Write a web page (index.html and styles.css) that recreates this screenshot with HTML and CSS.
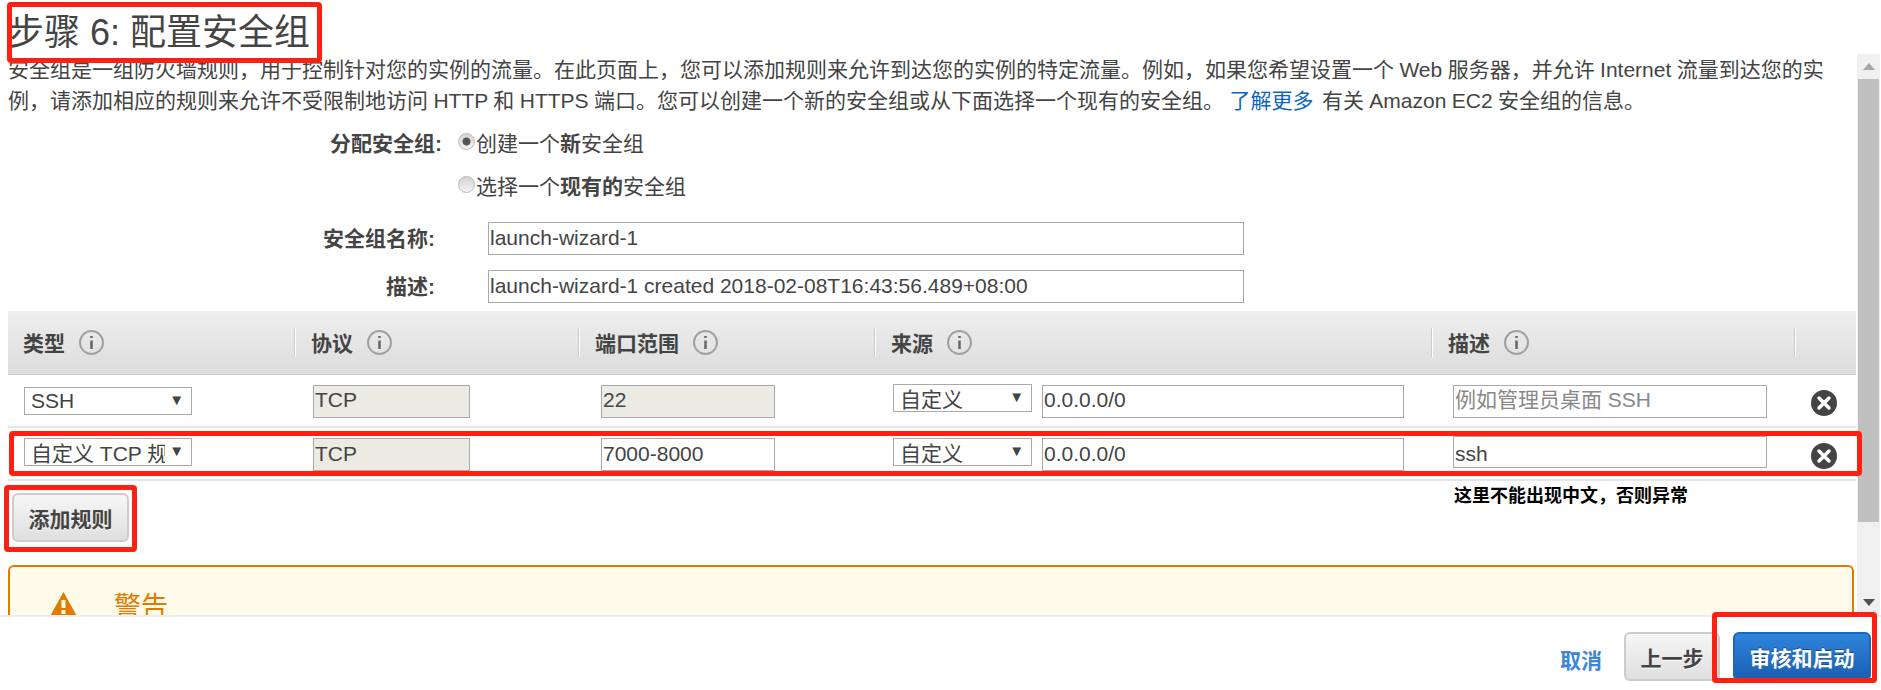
FILE: index.html
```html
<!-- === EC2 WIZARD STEP 6: SECURITY GROUP === -->
<!DOCTYPE html>
<html>
<head>
  <title>步骤 6: 配置安全组</title>
  <link rel="stylesheet" href="styles.css">
</head>
<body>
  <div class="page">
    <div class="scrollArea">
      <div class="content">
        <h1>步骤 6: 配置安全组</h1>
        <p class="intro">安全组是一组防火墙规则，用于控制针对您的实例的流量。在此页面上，您可以添加规则来允许到达您的实例的特定流量。例如，如果您希望设置一个 Web 服务器，并允许 Internet 流量到达您的实例，请添加相应的规则来允许不受限制地访问 HTTP 和 HTTPS 端口。您可以创建一个新的安全组或从下面选择一个现有的安全组。 <a href="#">了解更多</a> 有关 Amazon EC2 安全组的信息。</p>

        <div class="radioRow">
          <span class="radioLabel">分配安全组:</span>
          <label class="radioOption"><input type="radio" name="sg" checked>创建一个<b>新</b>安全组</label>
        </div>
        <div class="radioRow">
          <span class="radioLabel"></span>
          <label class="radioOption"><input type="radio" name="sg">选择一个<b>现有的</b>安全组</label>
        </div>

        <div class="fieldRow firstField">
          <span class="fieldLabel">安全组名称:</span>
          <input class="textBox wide" type="text" value="launch-wizard-1">
        </div>
        <div class="fieldRow">
          <span class="fieldLabel">描述:</span>
          <input class="textBox wide" type="text" value="launch-wizard-1 created 2018-02-08T16:43:56.489+08:00">
        </div>

        <table class="rules">
          <colgroup>
            <col class="colType"><col class="colProto"><col class="colPort"><col class="colSource"><col class="colDesc"><col class="colDel">
          </colgroup>
          <thead>
            <tr>
              <th><div class="thCell first">类型 <svg class="info" viewBox="0 0 25 25"><circle cx="12.5" cy="12.5" r="11.5"/><line x1="12.5" y1="10.5" x2="12.5" y2="19"/><line x1="12.5" y1="6" x2="12.5" y2="8"/></svg></div></th>
              <th><div class="thCell">协议 <svg class="info" viewBox="0 0 25 25"><circle cx="12.5" cy="12.5" r="11.5"/><line x1="12.5" y1="10.5" x2="12.5" y2="19"/><line x1="12.5" y1="6" x2="12.5" y2="8"/></svg></div></th>
              <th><div class="thCell">端口范围 <svg class="info" viewBox="0 0 25 25"><circle cx="12.5" cy="12.5" r="11.5"/><line x1="12.5" y1="10.5" x2="12.5" y2="19"/><line x1="12.5" y1="6" x2="12.5" y2="8"/></svg></div></th>
              <th><div class="thCell">来源 <svg class="info" viewBox="0 0 25 25"><circle cx="12.5" cy="12.5" r="11.5"/><line x1="12.5" y1="10.5" x2="12.5" y2="19"/><line x1="12.5" y1="6" x2="12.5" y2="8"/></svg></div></th>
              <th><div class="thCell">描述 <svg class="info" viewBox="0 0 25 25"><circle cx="12.5" cy="12.5" r="11.5"/><line x1="12.5" y1="10.5" x2="12.5" y2="19"/><line x1="12.5" y1="6" x2="12.5" y2="8"/></svg></div></th>
              <th><div class="thCell"></div></th>
            </tr>
          </thead>
          <tbody>
            <tr>
              <td><div class="selectWrap typeSelect shiftDown"><select><option>SSH</option></select><span class="selectArrow">▼</span></div></td>
              <td><input class="textBox proto" type="text" value="TCP" disabled></td>
              <td><input class="textBox proto" type="text" value="22" disabled></td>
              <td><div class="sourceCell"><div class="selectWrap sourceSelect lowText shiftUp"><select><option>自定义</option></select><span class="selectArrow">▼</span></div><input class="textBox sourceBox" type="text" value="0.0.0.0/0"></div></td>
              <td><input class="textBox descBox" type="text" placeholder="例如管理员桌面 SSH"></td>
              <td><svg class="removeIcon" viewBox="0 0 26 26"><circle cx="13" cy="13" r="13"/><path d="M8 8 L18 18 M18 8 L8 18"/></svg></td>
            </tr>
            <tr>
              <td><div class="selectWrap typeSelect lowText"><select><option>自定义 TCP 规则</option></select><span class="selectArrow">▼</span></div></td>
              <td><input class="textBox proto" type="text" value="TCP" disabled></td>
              <td><input class="textBox proto enabled" type="text" value="7000-8000"></td>
              <td><div class="sourceCell"><div class="selectWrap sourceSelect lowText"><select><option>自定义</option></select><span class="selectArrow">▼</span></div><input class="textBox sourceBox" type="text" value="0.0.0.0/0"></div></td>
              <td><input class="textBox descBox editedDesc" type="text" value="ssh"></td>
              <td><svg class="removeIcon" viewBox="0 0 26 26"><circle cx="13" cy="13" r="13"/><path d="M8 8 L18 18 M18 8 L8 18"/></svg></td>
            </tr>
          </tbody>
        </table>

        <button class="btn addRule">添加规则</button>

        <div class="warning">
          <svg class="warnIcon" viewBox="0 0 29 26"><path d="M14.5 0 L29 26 L0 26 Z"/><rect x="12.5" y="8" width="4" height="8"/><rect x="12.5" y="18" width="4" height="4"/></svg>
          <span class="warnTitle">警告</span>
        </div>
      </div>

      <div class="scrollbar">
        <div class="scrollEnd"><span class="arrowUp"></span></div>
        <div class="thumb"></div>
        <div class="scrollGap"></div>
        <div class="scrollEnd"><span class="arrowDown"></span></div>
      </div>
    </div>

    <div class="footer">
      <a class="cancel" href="#">取消</a>
      <button class="btn prev">上一步</button>
      <button class="btn primary">审核和启动</button>
    </div>

    <!-- red markup drawn over the screenshot -->
    <div class="mark markTitle"></div>
    <div class="mark markRow"></div>
    <div class="mark markAdd"></div>
    <div class="mark markLaunch"></div>
    <div class="note">这里不能出现中文，否则异常</div>
  </div>
</body>
</html>
```

FILE: styles.css
```css
* { box-sizing: border-box; }
body { margin: 0; background: #fff; color: #444; font-family: "Liberation Sans", "Noto Sans CJK SC", sans-serif; font-size: 21px; }
.page { position: relative; width: 1881px; height: 690px; overflow: hidden; display: flex; flex-direction: column; }

.scrollArea { display: flex; height: 617px; border-bottom: 2px solid #eee; }
.content { width: 1856px; height: 615px; overflow: hidden; padding-left: 8px; }

h1 { margin: 0; padding-top: 12px; font-size: 36px; font-weight: normal; line-height: 42px; }
.intro { margin: 0 0 4px; max-width: 1825px; line-height: 31px; word-spacing: -0.4px; }
.intro a { margin-right: 3px; color: #1166bb; text-decoration: none; }

.radioRow { display: flex; align-items: center; height: 43px; }
.radioLabel { width: 434px; text-align: right; font-weight: bold; margin-right: 16px; }
.radioOption { display: flex; align-items: center; }
.radioOption input { appearance: none; width: 17px; height: 17px; margin: 0 1px 1px 0; border: 1px solid #b8b8b8; border-radius: 50%; background: linear-gradient(#d4d4d4, #f2f2f2); }
.radioOption input:checked { background: radial-gradient(circle, #555 0 3.5px, transparent 4.5px), linear-gradient(#d4d4d4, #f2f2f2); }

.fieldRow { display: flex; align-items: center; height: 33px; margin-bottom: 15px; }
.firstField { margin-top: 16px; }
.fieldLabel { width: 427px; padding-bottom: 4px; text-align: right; font-weight: bold; margin-right: 53px; }

.textBox { height: 33px; padding: 0 1px 2px; border: 1px solid #aaa; font: inherit; color: #444; background: #fff; display: block; }
.textBox::placeholder { color: #888; }
.wide { width: 756px; }
.proto { width: 157px; background: #ebebe4; }
.proto.enabled { background: #fff; }
td:nth-child(3) .proto { width: 174px; }

.rules { width: 1848px; margin-top: -7px; border-collapse: collapse; table-layout: fixed; }
.colType { width: 286px; }
.colProto { width: 284px; }
.colPort { width: 296px; }
.colSource { width: 557px; }
.colDesc { width: 363px; }
.colDel { width: 62px; }
.rules th { height: 63px; padding: 0; text-align: left; font-size: 21px; background: linear-gradient(#eeeeee, #dddddd); border-bottom: 1px solid #ccc; }
.thCell { display: flex; align-items: center; gap: 14px; height: 29px; padding-left: 16px; border-left: 1px solid #ccc; box-shadow: inset 1px 0 #fff; }
.thCell.first { border-left: none; box-shadow: none; padding-left: 15px; }
.info { width: 25px; height: 25px; }
.info circle { fill: none; stroke: #a0a0a0; stroke-width: 2; }
.info line { stroke: #666; stroke-width: 2.5; }

.rules td { height: 53px; padding: 10px 0 0; vertical-align: top; border-bottom: 2px solid #e6e6e6; }
.rules td:nth-child(1) { padding-left: 16px; }
.rules td:nth-child(2) { padding-left: 19px; }
.rules td:nth-child(3) { padding-left: 23px; }
.rules td:nth-child(4) { padding-left: 19px; }
.rules td:nth-child(5) { padding-left: 22px; }
.rules td:nth-child(6) { padding-left: 17px; padding-top: 15px; }

.selectWrap { position: relative; height: 28px; }
.selectWrap select { appearance: none; display: block; width: 100%; height: 100%; padding: 0 26px 0 6px; border: 1px solid #aaa; border-radius: 0; background: #fff; font: inherit; color: #444; }
.lowText select { padding-top: 3px; }
.selectArrow { position: absolute; right: 8px; top: 4px; font-size: 15px; line-height: 18px; color: #444; pointer-events: none; }
.typeSelect { width: 168px; }
.sourceSelect { width: 139px; }
.shiftDown { margin-top: 2px; }
.shiftUp { margin-top: -1px; }
.sourceCell { display: flex; align-items: flex-start; gap: 10px; }
.sourceBox { width: 362px; }
.descBox { width: 314px; }
.editedDesc { height: 32px; margin-top: -2px; padding: 3px 1px 0; }
.removeIcon { display: block; width: 26px; height: 26px; }
.removeIcon circle { fill: #444; }
.removeIcon path { stroke: #fff; stroke-width: 3.5; stroke-linecap: round; fill: none; }

.btn { height: 49px; border: 2px solid #ccc; border-radius: 6px; background: linear-gradient(#f6f6f6, #dfdfdf); font: bold 21px "Liberation Sans", "Noto Sans CJK SC", sans-serif; color: #444; text-shadow: 0 1px 0 #fff; padding: 0; }
.addRule { display: block; width: 117px; margin: 12px 0 23px 4px; }

.warning { display: flex; align-items: flex-start; gap: 36px; height: 200px; margin-right: 2px; padding: 25px 0 0 39px; border: 2px solid #e07b00; border-radius: 6px; background: #fffbea; }
.warnIcon { width: 29px; height: 26px; fill: #e07b00; }
.warnIcon rect { fill: #fffbea; }
.warnTitle { font-size: 27px; line-height: 30px; color: #e07b00; }

.scrollbar { display: flex; flex-direction: column; align-items: center; width: 23px; height: 561px; margin: 54px 1px 0 1px; background: #f0f0f0; }
.scrollEnd { display: flex; align-items: center; justify-content: center; height: 25px; flex-shrink: 0; }
.arrowUp { border: 6px solid transparent; border-top: none; border-bottom: 7px solid #a6a6a6; }
.arrowDown { border: 6px solid transparent; border-bottom: none; border-top: 7px solid #505050; }
.thumb { width: 21px; height: 443px; background: #c0c0c0; flex-shrink: 0; }
.scrollGap { flex: 1; }

.footer { display: flex; justify-content: flex-end; align-items: flex-start; flex: 1; padding: 15px 10px 0 0; }
.cancel { margin: 12px 22px 0 0; font-size: 21px; font-weight: bold; color: #3b86d6; text-decoration: none; }
.prev { width: 96px; margin-right: 13px; }
.primary { width: 138px; border-color: #1c68b8; background: linear-gradient(#2f84dc, #1a5fb0); color: #fff; text-shadow: 0 -1px 0 #14508f; }

.mark { position: absolute; border: 5px solid #ff2012; border-radius: 4px; }
.markTitle { left: 7px; top: 2px; width: 315px; height: 61px; }
.markRow { left: 9px; top: 431px; width: 1853px; height: 45px; }
.markAdd { left: 4px; top: 485px; width: 133px; height: 67px; }
.markLaunch { left: 1712px; top: 612px; width: 165px; height: 71px; }
.note { position: absolute; left: 1454px; top: 485px; font-size: 18px; line-height: 22px; font-weight: bold; color: #000; }
```
